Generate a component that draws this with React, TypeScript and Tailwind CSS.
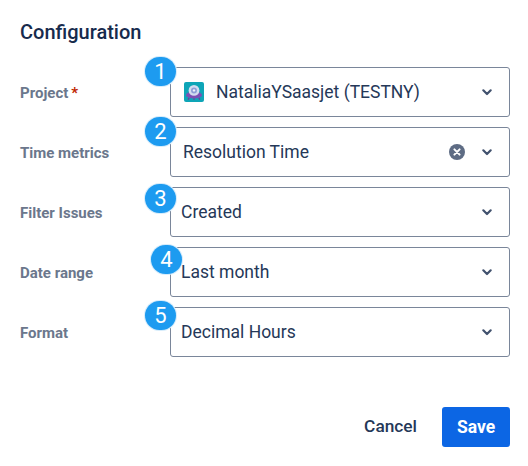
import React from 'react';

function Chevron() {
  return (
    <svg width="24" height="24" viewBox="0 0 24 24" className="shrink-0 text-[#42526e]">
      <path d="M8.3 10.3 12 14l3.7-3.7" fill="none" stroke="currentColor" strokeWidth="2.2" strokeLinecap="round" strokeLinejoin="round" />
    </svg>
  );
}

function ClearIcon() {
  return (
    <svg width="16" height="16" viewBox="0 0 16 16" className="shrink-0">
      <circle cx="8" cy="8" r="8" fill="#5e6c84" />
      <path d="M5.4 5.4l5.2 5.2M10.6 5.4l-5.2 5.2" stroke="#fff" strokeWidth="2" strokeLinecap="round" />
    </svg>
  );
}

function ProjectIcon() {
  return (
    <svg width="20" height="20" viewBox="0 0 20 20" className="shrink-0">
      <rect width="20" height="20" rx="2" fill="#0ea5b7" />
      <ellipse cx="10" cy="13" rx="8" ry="3.6" fill="#7c4fb5" />
      <path d="M5 16l-.8 1.6M15 16l.8 1.6M10 16.5v1.3" stroke="#6b3fa0" strokeWidth="1.5" />
      <circle cx="10" cy="8.4" r="5.4" fill="#d3dcf0" />
      <circle cx="10" cy="8.4" r="3" fill="#8f9fd8" />
      <circle cx="10" cy="8.4" r="1.2" fill="#eef2fb" />
    </svg>
  );
}

function Badge({ n, className }: { n: number; className: string }) {
  return (
    <div className={`absolute w-[31px] h-[29px] rounded-full bg-[#1d9bf0] ring-1 ring-[#d6ecfb] flex items-center justify-center text-white text-[22px] leading-none ${className}`}>
      {n}
    </div>
  );
}

function Row({ label, required, children }: { label: string; required?: boolean; children: React.ReactNode }) {
  return (
    <div className="flex items-center h-[50px]">
      <div className="w-[150px] shrink-0 pt-[3px] text-[15px] font-bold text-[#6b778c]">
        {label}
        {required && <span className="text-[#bf2600] ml-[3px]">*</span>}
      </div>
      <div className="w-[340px] shrink-0 h-[50px] border border-[#7a869a] rounded-[3px] flex items-center text-[17.5px] text-[#253858] bg-white">
        {children}
      </div>
    </div>
  );
}

export default function App() {
  return (
    <div className="relative w-[528px] h-[466px] bg-white pl-5 pr-[18px] pt-[20px]" style={{ fontFamily: 'Roboto, sans-serif' }}>
      <h1 className="text-[20px] leading-[24px] font-medium text-[#172b4d]">Configuration</h1>

      <div className="mt-[23px] flex flex-col gap-[10px]">
        <Row label="Project" required>
          <div className="ml-[13px]"><ProjectIcon /></div>
          <span className="ml-[12px] flex-1">NataliaYSaasjet (TESTNY)</span>
          <div className="mr-[10px]"><Chevron /></div>
        </Row>
        <Row label="Time metrics">
          <span className="ml-[12px] flex-1">Resolution Time</span>
          <ClearIcon />
          <div className="ml-[10px] mr-[10px]"><Chevron /></div>
        </Row>
        <Row label="Filter Issues">
          <span className="ml-[10px] flex-1">Created</span>
          <div className="mr-[10px]"><Chevron /></div>
        </Row>
        <Row label="Date range">
          <span className="ml-[10px] flex-1">Last month</span>
          <div className="mr-[10px]"><Chevron /></div>
        </Row>
        <Row label="Format">
          <span className="ml-[10px] flex-1">Decimal Hours</span>
          <div className="mr-[10px]"><Chevron /></div>
        </Row>
      </div>

      <div className="mt-[50px] flex justify-end items-center">
        <button className="text-[17.3px] font-medium text-[#253858] mr-[25px]">Cancel</button>
        <button className="w-[68px] h-[40px] rounded-[3px] bg-[#0c66e4] text-white text-[17.5px] font-bold">Save</button>
      </div>

      <Badge n={1} className="left-[145px] top-[57px]" />
      <Badge n={2} className="left-[145px] top-[117px]" />
      <Badge n={3} className="left-[145px] top-[184px]" />
      <Badge n={4} className="left-[151px] top-[245px]" />
      <Badge n={5} className="left-[145px] top-[301px]" />
    </div>
  );
}
